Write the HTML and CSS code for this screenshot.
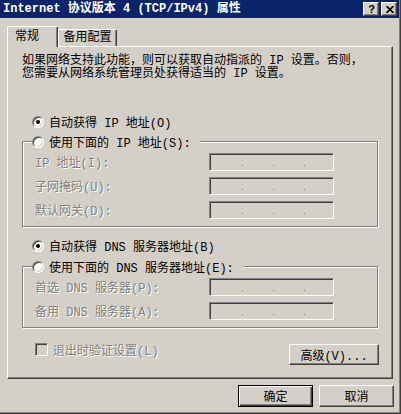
FILE: index.html
```html
<!DOCTYPE html>
<html lang="zh-CN">
<head>
<meta charset="utf-8">
<title>Internet 协议版本 4 (TCP/IPv4) 属性</title>
<link rel="stylesheet" href="styles.css">
</head>
<body>
<div class="window">
  <div class="titlebar">
    <span class="title">Internet 协议版本 4 (TCP/IPv4) 属性</span>
    <div class="tbtns">
      <span class="tbtn help">?</span>
      <span class="tbtn close"><svg width="8" height="7" viewBox="0 0 8 7"><path d="M0.5 0 L7.5 7 M7.5 0 L0.5 7" stroke="#000" stroke-width="1.7" fill="none"/></svg></span>
    </div>
  </div>
  <div class="body">
    <div class="tabs">
      <div class="tab active">常规</div>
      <div class="tab">备用配置</div>
    </div>
    <div class="panel">
      <div class="intro">
        <div class="line">如果网络支持此功能，则可以获取自动指派的 IP 设置。否则，</div>
        <div class="line">您需要从网络系统管理员处获得适当的 IP 设置。</div>
      </div>
      <div class="opt first"><span class="radio checked"></span><span>自动获得 IP 地址(O)</span></div>
      <div class="group g-ip">
        <div class="opt legend legend-ip"><span class="radio"></span><span>使用下面的 IP 地址(S):</span></div>
        <div class="frow"><span class="flabel">IP 地址(I):</span><span class="ipf"><i></i><i></i><i></i></span></div>
        <div class="frow"><span class="flabel">子网掩码(U):</span><span class="ipf"><i></i><i></i><i></i></span></div>
        <div class="frow"><span class="flabel">默认网关(D):</span><span class="ipf"><i></i><i></i><i></i></span></div>
      </div>
      <div class="opt dns-first"><span class="radio checked"></span><span>自动获得 DNS 服务器地址(B)</span></div>
      <div class="group g-dns">
        <div class="opt legend legend-dns"><span class="radio"></span><span>使用下面的 DNS 服务器地址(E):</span></div>
        <div class="frow"><span class="flabel">首选 DNS 服务器(P):</span><span class="ipf"><i></i><i></i><i></i></span></div>
        <div class="frow"><span class="flabel">备用 DNS 服务器(A):</span><span class="ipf"><i></i><i></i><i></i></span></div>
      </div>
      <div class="bottomrow">
        <div class="chk"><span class="box"></span><span class="dis">退出时验证设置(L)</span></div>
        <span class="btn adv">高级(V)...</span>
      </div>
    </div>
    <div class="actions">
      <span class="btn default">确定</span>
      <span class="btn">取消</span>
    </div>
  </div>
</div>
</body>
</html>
```
FILE: styles.css
```css
* { box-sizing: border-box; }
html, body { margin: 0; padding: 0; }
body {
  background: #d4d0c8;
  font-family: "Liberation Mono", "Noto Sans CJK SC", monospace;
  font-size: 12px;
  color: #000;
}
.window {
  width: 401px;
  height: 414px;
  background: #d4d0c8;
  box-shadow: inset -1px -1px 0 #404040, inset -2px -2px 0 #808080;
}
.titlebar {
  height: 18px;
  margin-right: 2px;
  background: #0a246a;
  display: flex;
  align-items: center;
  justify-content: space-between;
  padding: 0 2px 0 3px;
}
.title {
  color: #fff;
  font-weight: bold;
  line-height: 14px;
  white-space: nowrap;
}
.tbtns { display: flex; gap: 2px; }
.tbtn {
  width: 16px;
  height: 14px;
  background: #d4d0c8;
  border-top: 1px solid #fff;
  border-left: 1px solid #fff;
  border-right: 1px solid #404040;
  border-bottom: 1px solid #404040;
  box-shadow: inset -1px -1px 0 #808080;
  display: flex;
  align-items: center;
  justify-content: center;
}
.help {
  font-family: "Liberation Sans", sans-serif;
  font-weight: bold;
  font-size: 11px;
  line-height: 11px;
  padding-left: 1px;
}
.close svg { display: block; margin-left: 1px; }
.body { padding: 8px 0 0 7px; }
.tabs {
  display: flex;
  align-items: flex-end;
}
.tab {
  height: 17px;
  width: 59px;
  border-top: 1px solid #fff;
  border-left: 1px solid #fff;
  border-right: 1px solid #404040;
  border-top-left-radius: 2px;
  border-top-right-radius: 2px;
  box-shadow: inset -1px 0 0 #808080;
  line-height: 15px;
  padding-top: 1px;
  text-align: center;
  white-space: nowrap;
}
.tab.active {
  position: relative;
  z-index: 1;
  width: 51px;
  height: 21px;
  margin-bottom: -1px;
  background: #d4d0c8;
  text-align: left;
  padding-left: 7px;
  padding-top: 3px;
}
.panel {
  width: 386px;
  height: 333px;
  border-top: 1px solid #fff;
  border-left: 1px solid #fff;
  border-right: 1px solid #404040;
  border-bottom: 1px solid #404040;
  box-shadow: inset -1px -1px 0 #808080;
  padding: 8px 0 0 14px;
}
.intro { height: 26px; }
.line {
  height: 13px;
  line-height: 13px;
  white-space: nowrap;
}
.opt {
  display: flex;
  align-items: center;
  gap: 5px;
  height: 15px;
  white-space: nowrap;
}
.opt.first { margin: 33px 0 0 10px; }
.opt.dns-first { margin: 11px 0 0 10px; }
.radio {
  width: 12px;
  height: 12px;
  flex: none;
  border-radius: 50%;
  background: #fff;
  border: 1px solid;
  border-color: #808080 #fff #fff #808080;
  box-shadow: inset 1px 1px 0 #404040, inset -1px -1px 0 #d4d0c8;
  display: flex;
  align-items: center;
  justify-content: center;
}
.radio.checked::after {
  content: "";
  width: 4px;
  height: 4px;
  border-radius: 50%;
  background: #000;
}
.group {
  width: 356px;
  border: 1px solid #808080;
  box-shadow: 1px 1px 0 #fff, inset 1px 1px 0 #fff;
  padding-bottom: 7px;
  display: flex;
  flex-direction: column;
  gap: 6px;
}
.g-ip { margin-top: 12px; }
.g-dns { margin-top: 13px; }
.legend {
  margin: -8px 0 -2px 9px;
  background: #d4d0c8;
}
.legend-ip { width: 168px; }
.legend-dns { width: 211px; }
.frow {
  display: flex;
  align-items: center;
  height: 18px;
  padding-left: 12px;
}
.flabel {
  width: 174px;
  color: #808080;
  text-shadow: 1px 1px 0 #fff;
  white-space: nowrap;
}
.dis {
  color: #808080;
  text-shadow: 1px 1px 0 #fff;
}
.ipf {
  width: 125px;
  height: 18px;
  border: 1px solid;
  border-color: #808080 #fff #fff #808080;
  box-shadow: inset 1px 1px 0 #404040, inset -1px -1px 0 #d4d0c8;
  display: flex;
  align-items: flex-start;
  gap: 30px;
  padding: 11px 0 0 32px;
}
.ipf i {
  display: block;
  width: 1px;
  height: 1px;
  background: #808080;
}
.bottomrow {
  width: 357px;
  margin-top: 14px;
  display: flex;
  align-items: flex-start;
  justify-content: space-between;
}
.chk {
  display: flex;
  align-items: center;
  gap: 5px;
  height: 15px;
  margin-left: 13px;
  white-space: nowrap;
}
.box {
  width: 13px;
  height: 13px;
  border: 1px solid;
  border-color: #808080 #fff #fff #808080;
  box-shadow: inset 1px 1px 0 #404040, inset -1px -1px 0 #d4d0c8;
  background: #d4d0c8;
}
.btn {
  width: 75px;
  height: 22px;
  display: flex;
  align-items: center;
  justify-content: center;
  border-top: 1px solid #fff;
  border-left: 1px solid #fff;
  border-right: 1px solid #404040;
  border-bottom: 1px solid #404040;
  box-shadow: inset -1px -1px 0 #808080;
  white-space: nowrap;
}
.btn.adv {
  width: 90px;
  height: 21px;
  margin-top: 2px;
}
.btn.default {
  border: 1px solid #000;
  box-shadow: inset 1px 1px 0 #fff, inset -1px -1px 0 #404040, inset -2px -2px 0 #808080;
}
.actions {
  display: flex;
  justify-content: flex-end;
  gap: 6px;
  padding-right: 7px;
  margin-top: 6px;
}
```
